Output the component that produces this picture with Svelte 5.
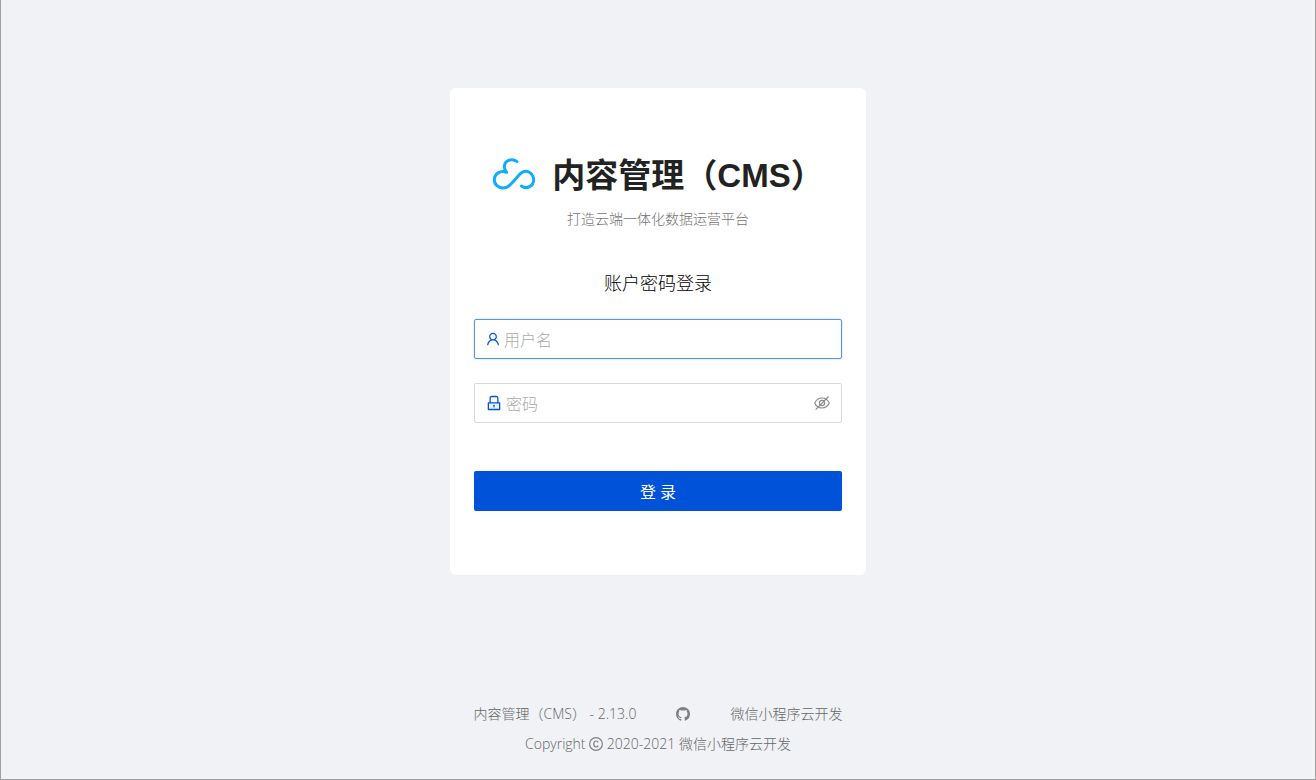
<script lang="ts">
  import { onMount } from 'svelte';

  const version = '2.13.0';

  let username = '';
  let password = '';
  let showPassword = false;
  let usernameInput: HTMLInputElement;

  onMount(() => usernameInput.focus());
</script>

<div class="page">
  <main class="card">
    <header class="brand">
      <svg class="logo" viewBox="21 7 132 132" aria-hidden="true">
        <path d="M96 36C80 24 58 33 58 52c0 6 3 11 7 16C47 61 28 72 28 90c0 15 12 25 26 25 12 0 19-6 26-14l17-19c8-9 13-17 25-17 13 0 24 11 24 25 0 18-20 31-37 19" />
      </svg>
      <h1>内容管理（CMS）</h1>
    </header>
    <p class="desc">打造云端一体化数据运营平台</p>

    <form on:submit|preventDefault>
      <h2>账户密码登录</h2>

      <label class="field">
        <svg class="prefix" viewBox="64 64 896 896" aria-hidden="true">
          <path d="M858.5 763.6a374 374 0 00-80.6-119.5 375.63 375.63 0 00-119.5-80.6c-.4-.2-.8-.3-1.2-.5C719.5 518 760 444.7 760 362c0-137-111-248-248-248S264 225 264 362c0 82.7 40.5 156 102.8 201.1-.4.2-.8.3-1.2.5-44.8 18.9-85 46-119.5 80.6a375.63 375.63 0 00-80.6 119.5A371.7 371.7 0 00136 901.8a8 8 0 008 8.2h60c4.4 0 7.9-3.5 8-7.8 2-77.2 33-149.5 87.8-204.3 56.7-56.7 132-87.9 212.2-87.9s155.5 31.2 212.2 87.9C779 752.7 810 825 812 902.2c.1 4.4 3.6 7.8 8 7.8h60a8 8 0 008-8.2c-1-47.8-10.9-94.3-29.5-138.2zM512 534c-45.9 0-89.1-17.9-121.6-50.4S340 407.9 340 362c0-45.9 17.9-89.1 50.4-121.6S466.1 190 512 190s89.1 17.9 121.6 50.4S684 316.1 684 362c0 45.9-17.9 89.1-50.4 121.6S557.9 534 512 534z" />
        </svg>
        <input type="text" aria-label="用户名" placeholder="用户名" bind:value={username} bind:this={usernameInput} />
      </label>

      <div class="field">
        <svg class="prefix lock" viewBox="64 64 896 896" aria-hidden="true">
          <path class="tone" d="M232 536h560v304H232z" />
          <path d="M832 464h-68V240c0-70.7-57.3-128-128-128H388c-70.7 0-128 57.3-128 128v224h-68c-17.7 0-32 14.3-32 32v384c0 17.7 14.3 32 32 32h640c17.7 0 32-14.3 32-32V496c0-17.7-14.3-32-32-32zM332 240c0-30.9 25.1-56 56-56h248c30.9 0 56 25.1 56 56v224H332V240zm460 600H232V536h560v304zM484 701v53c0 4.4 3.6 8 8 8h40c4.4 0 8-3.6 8-8v-53a48.01 48.01 0 10-56 0z" />
        </svg>
        <input type={showPassword ? 'text' : 'password'} aria-label="密码" placeholder="密码" bind:value={password} />
        <button class="toggle" type="button" aria-label="显示密码" on:click={() => (showPassword = !showPassword)}>
          <svg viewBox="0 0 16 16" aria-hidden="true">
            <path d="M.7 8C2.3 4.7 4.8 3 8 3s5.7 1.7 7.3 5c-1.6 3.3-4.1 5-7.3 5S2.3 11.3.7 8z" />
            <circle cx="8" cy="8" r="2.6" />
            {#if !showPassword}
              <path d="M1.7 14.7 14.5 1.5" />
            {/if}
          </svg>
        </button>
      </div>

      <button class="submit" type="submit">登 录</button>
    </form>
  </main>

  <footer>
    <nav>
      <a href="#cms">内容管理（CMS） - {version}</a>
      <a href="#github" aria-label="GitHub">
        <svg class="icon" viewBox="0 0 16 16" aria-hidden="true">
          <path d="M8 0C3.58 0 0 3.58 0 8c0 3.54 2.29 6.53 5.47 7.59.4.07.55-.17.55-.38 0-.19-.01-.82-.01-1.49-2.01.37-2.53-.49-2.69-.94-.09-.23-.48-.94-.82-1.13-.28-.15-.68-.52-.01-.53.63-.01 1.08.58 1.23.82.72 1.21 1.87.87 2.33.66.07-.52.28-.87.51-1.07-1.78-.2-3.64-.89-3.64-3.95 0-.87.31-1.59.82-2.15-.08-.2-.36-1.02.08-2.12 0 0 .67-.21 2.2.82.64-.18 1.32-.27 2-.27.68 0 1.36.09 2 .27 1.53-1.04 2.2-.82 2.2-.82.44 1.1.16 1.92.08 2.12.51.56.82 1.27.82 2.15 0 3.07-1.87 3.75-3.65 3.95.29.25.54.73.54 1.48 0 1.07-.01 1.93-.01 2.2 0 .21.15.46.55.38A8.013 8.013 0 0016 8c0-4.42-3.58-8-8-8z" />
        </svg>
      </a>
      <a href="#tcb">微信小程序云开发</a>
    </nav>
    <p class="copyright">
      Copyright
      <svg class="icon outline" viewBox="0 0 14 14" role="img" aria-label="©">
        <circle cx="7" cy="7" r="6.4" />
        <path d="M9.2 5.500C8.900 4.500 8.100 4 7.100 4 5.600 4 4.800 5.100 4.800 7s.8 3 2.300 3c1 0 1.800-.5 2.100-1.500" />
      </svg>
      2020-2021 微信小程序云开发
    </p>
  </footer>
</div>

<style>
  :global(body) { margin: 0; }

  .page {
    box-sizing: border-box;
    min-height: 100vh;
    padding: 88px 24px 24px;
    display: flex;
    flex-direction: column;
    align-items: center;
    background: #f0f2f5;
    border: 1px solid #a0a0a0;
    border-top: 0;
    color: #222;
    font: 14px/22px "Open Sans", "Noto Sans CJK SC", sans-serif;
  }

  .card {
    box-sizing: border-box;
    width: 100%;
    max-width: 416px;
    padding: 64px 24px;
    background: #fff;
    border-radius: 6px;
  }

  .brand { display: flex; align-items: center; justify-content: center; gap: 16px; height: 44px; }
  .logo { flex: none; width: 44px; height: 44px; fill: none; stroke: #0fadff; stroke-width: 9; stroke-linecap: round; stroke-linejoin: round; }
  h1 { margin: 0; padding-top: 4px; font: bold 33px/44px "Liberation Sans", "Noto Sans CJK SC", sans-serif; white-space: nowrap; }
  .desc { margin: 12px 0 40px; text-align: center; color: #737373; font-weight: 300; }
  h2 { margin: 0 0 23px; color: #000; font-size: 18px; line-height: 26px; font-weight: 300; text-align: center; }

  .field {
    box-sizing: border-box;
    display: flex;
    align-items: center;
    gap: 4px;
    height: 40px;
    margin-bottom: 24px;
    padding: 0 11px;
    border: 1px solid #d9d9d9;
    border-radius: 2px;
  }
  .field:focus-within { border-color: #5793e6; box-shadow: 0 0 2px rgba(0, 82, 217, .3); }
  .field input { flex: 1; min-width: 0; padding: 2px 0 0; border: 0; outline: 0; background: none; color: #222; font: inherit; font-size: 16px; font-weight: 300; caret-color: transparent; }
  .field input::placeholder { color: #aaa; }
  .prefix { flex: none; width: 14px; height: 14px; fill: #0052d9; }
  .lock { width: 16px; height: 16px; }
  .tone { fill: #e6f7ff; }

  .toggle { display: flex; padding: 0; border: 0; background: none; cursor: pointer; }
  .toggle svg { width: 16px; height: 16px; fill: none; stroke: #8c8c8c; stroke-width: 1.2; }

  .submit {
    display: block;
    width: 100%;
    height: 40px;
    margin-top: 48px;
    padding: 2px 0 0;
    border: 0;
    border-radius: 2px;
    background: #0052d9;
    color: #fff;
    font: inherit;
    font-size: 16px;
    cursor: pointer;
  }

  footer { margin-top: auto; color: #666; text-align: center; font-weight: 300; }
  nav { display: flex; flex-wrap: wrap; justify-content: center; gap: 40px; margin-bottom: 8px; }
  nav a { color: inherit; text-decoration: none; }
  .icon { width: 14px; height: 14px; fill: #808080; vertical-align: -2px; }
  .outline { fill: none; stroke: #808080; stroke-width: 1.2; }
  .copyright { margin: 0; }
</style>
